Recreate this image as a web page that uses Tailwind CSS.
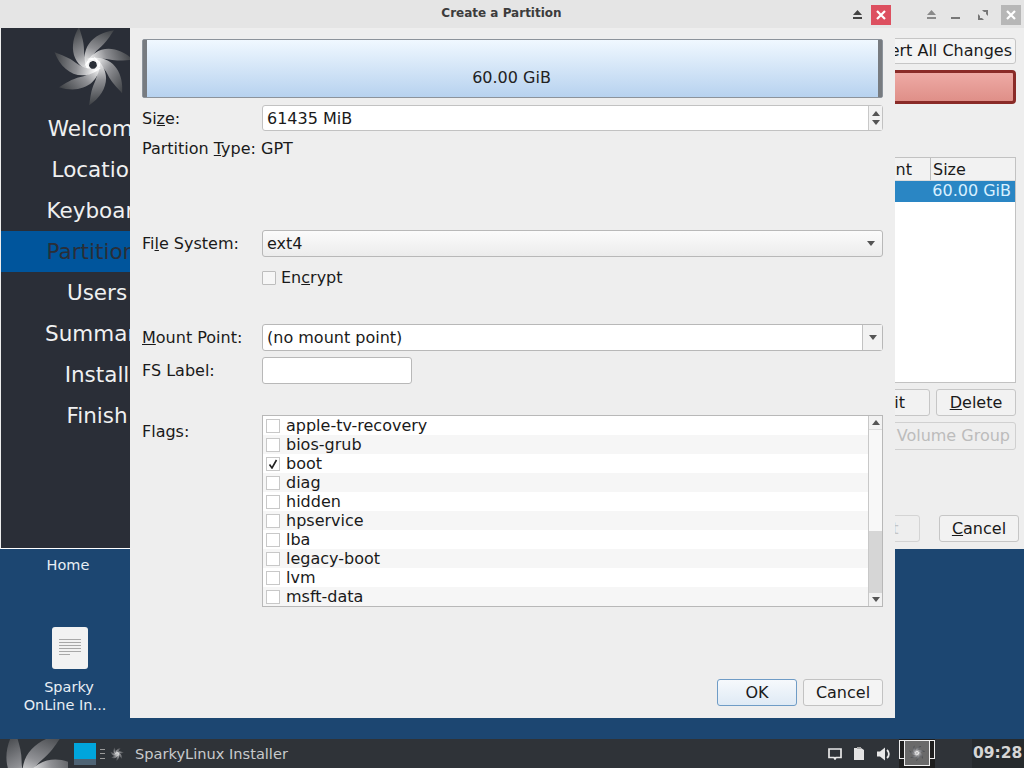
<!DOCTYPE html>
<html><head><meta charset="utf-8">
<script src="https://cdn.jsdelivr.net/npm/@tailwindcss/browser@4"></script>
</head>
<body class="m-0 overflow-hidden">
<div class="relative w-[1024px] h-[768px] overflow-hidden bg-[#1c4671] font-['DejaVu_Sans',sans-serif] text-[16px] text-[#1a1a1a]">
  <svg width="0" height="0" class="absolute">
    <defs>
      <linearGradient id="bl" x1="0.3" y1="0" x2="0.6" y2="1"><stop offset="0" stop-color="#3f4246"/><stop offset="0.55" stop-color="#8f9094"/><stop offset="1" stop-color="#ffffff"/></linearGradient>
      <path id="blade" d="M-14 -38C-25 -20 -22 3 3 8C-5 2 -9 -6 -9 -15C-9 -24 -12 -31 -14 -38Z" fill="url(#bl)"/>
      <g id="swirl">
        <use href="#blade"/><use href="#blade" transform="rotate(51.4)"/><use href="#blade" transform="rotate(102.8)"/><use href="#blade" transform="rotate(154.3)"/><use href="#blade" transform="rotate(205.7)"/><use href="#blade" transform="rotate(257.1)"/><use href="#blade" transform="rotate(308.6)"/>
      </g>
    </defs>
  </svg>

  <!-- Desktop icons -->
  <div class="absolute left-[18px] top-[557px] w-[100px] text-center text-[14.5px] leading-[17px] text-[#e8eef4]">Home</div>
  <div class="absolute left-[10px] top-[627px] w-[120px] flex flex-col items-center text-center text-[14.5px] leading-[18px] text-[#e8eef4]">
    <div class="w-[36px] h-[42px] rounded-[3px] bg-[#f2f2f2] flex flex-col gap-[2px] px-[7px] py-[12px]">
      <div class="h-[1px] bg-[#a8a8a8]"></div><div class="h-[1px] bg-[#a8a8a8]"></div><div class="h-[1px] bg-[#a8a8a8]"></div><div class="h-[1px] bg-[#a8a8a8]"></div><div class="h-[1px] bg-[#a8a8a8]"></div><div class="h-[1px] w-[11px] bg-[#a8a8a8]"></div>
    </div>
    <div class="mt-[9px] -ml-[2px]">Sparky</div>
    <div class="-ml-[10px]">OnLine In...</div>
  </div>

  <!-- Installer window (behind) -->
  <div class="absolute left-0 top-0 w-[1024px] h-[549px] bg-[#eeeeee] flex flex-col">
    <div class="h-[28px] shrink-0 bg-[#e5e5e5] relative">
      <svg class="absolute left-[926px] top-[10px]" width="11" height="9" viewBox="0 0 11 9"><path d="M5.5 0L10 5H1Z M1 7H10V9H1Z" fill="#8a8a8a"/></svg>
      <div class="absolute left-[951px] top-[17px] w-[9px] h-[2px] bg-[#777]"></div>
      <svg class="absolute left-[978px] top-[10px]" width="10" height="10" viewBox="0 0 10 10"><path d="M4 0H10V6L8 4V2H6Z M0 4L2 6V8H4L6 10H0Z" fill="#777"/></svg>
      <div class="absolute left-[1001px] top-[5px] w-[20px] h-[20px] bg-[#b7b7b7] flex items-center justify-center">
        <svg width="10" height="10" viewBox="0 0 10 10"><path d="M1 1L9 9M9 1L1 9" stroke="#fff" stroke-width="2.2"/></svg>
      </div>
    </div>
    <div class="flex-1 flex min-h-0">
      <div class="w-[192px] ml-[1px] shrink-0 bg-[#2a2e37] flex flex-col text-[21.5px] text-[#eff0f1] text-center border-b border-[#fff]">
        <div class="h-[80px] flex justify-center">
          <svg width="80" height="80" viewBox="-40 -40 80 80" class="ml-[-8px] -mt-[3px]"><use href="#swirl"/></svg>
        </div>
        <div class="h-[41px] leading-[41px]">Welcome</div>
        <div class="h-[41px] leading-[41px]">Location</div>
        <div class="h-[41px] leading-[41px]">Keyboard</div>
        <div class="h-[41px] leading-[41px] bg-[#00559c] text-[#2a2e37]">Partitions</div>
        <div class="h-[41px] leading-[41px]">Users</div>
        <div class="h-[41px] leading-[41px]">Summary</div>
        <div class="h-[41px] leading-[41px]">Install</div>
        <div class="h-[41px] leading-[41px]">Finish</div>
      </div>
      <div class="flex-1 pr-[8px] flex flex-col items-end min-w-0 text-[16px]">
        <div class="mt-[10px] h-[26px] pl-[6px] pr-[3px] flex items-center bg-[#f4f4f4] border border-[#c6c6c6] rounded-[3px] whitespace-nowrap">Revert All Changes</div>
        <div class="mt-[6px] h-[34px] w-[300px] bg-gradient-to-b from-[#eeaaa5] to-[#df8f88] border-[3px] border-[#8a2b28] rounded-[4px]"></div>
        <div class="mt-[53px] w-[300px] h-[226px] border border-[#c2c2c2] bg-white flex flex-col">
          <div class="h-[23px] bg-[#f2f2f2] flex justify-end border-b border-[#dcdcdc]">
            <div class="w-[39px] pr-[18px] text-right leading-[24px]">nt</div>
            <div class="w-[85px] pl-[2px] border-l border-[#bdbdbd] leading-[24px]">Size</div>
          </div>
          <div class="h-[21px] bg-[#2a86c4] text-[#d8f0ff] text-right pr-[4px] leading-[20px]">60.00 GiB</div>
        </div>
        <div class="mt-[6px] flex gap-[6px]">
          <div class="w-[80px] h-[27px] bg-[#f2f2f2] border border-[#c6c6c6] rounded-[3px] text-right pr-[24px] leading-[25px]">Edit</div>
          <div class="w-[80px] h-[27px] bg-[#f2f2f2] border border-[#c6c6c6] rounded-[3px] text-center leading-[25px]"><span class="underline">D</span>elete</div>
        </div>
        <div class="mt-[6px] h-[28px] px-[5px] bg-[#eeeeee] border border-[#d0d0d0] rounded-[3px] text-[#bcbcbc] leading-[26px] whitespace-nowrap">Create Volume Group</div>
        <div class="mt-[65px] -mr-[3px] flex gap-[19px]">
          <div class="w-[80px] h-[27px] bg-[#eeeeee] border border-[#d4d4d4] rounded-[3px] text-[#c4c4c4] text-center leading-[25px]">Next</div>
          <div class="w-[80px] h-[27px] bg-[#f2f2f2] border border-[#c6c6c6] rounded-[3px] text-center leading-[25px]"><span class="underline">C</span>ancel</div>
        </div>
      </div>
    </div>
  </div>

  <!-- Create a Partition dialog -->
  <div class="absolute left-[130px] top-0 w-[765px] h-[718px] bg-[#eeeeee] flex flex-col">
    <div class="h-[28px] shrink-0 -ml-[130px] w-[895px] bg-[#e5e5e5] relative text-center text-[12px] font-bold leading-[27px] text-[#3c3c3c]">
      <span class="pl-[108px]">Create a Partition</span>
      <svg class="absolute left-[852px] top-[10px]" width="11" height="9" viewBox="0 0 11 9"><path d="M5.5 0L10 5H1Z M1 7H10V9H1Z" fill="#444"/></svg>
      <div class="absolute left-[871px] top-[5px] w-[20px] h-[20px] bg-[#dd5060] flex items-center justify-center">
        <svg width="10" height="10" viewBox="0 0 10 10"><path d="M1 1L9 9M9 1L1 9" stroke="#fff" stroke-width="2.2"/></svg>
      </div>
    </div>
    <div class="flex-1 px-[12px] flex flex-col">
      <div class="mt-[11px] h-[59px] flex border border-[#8c939b] rounded-[2px]">
        <div class="w-[4px] bg-[#777b80]"></div>
        <div class="flex-1 bg-gradient-to-b from-[#f0f8ff] to-[#b7d2ef] flex items-end justify-center pb-[9px] pr-[2px] leading-[20px] text-[#222]">60.00 GiB</div>
        <div class="w-[4px] bg-[#777b80]"></div>
      </div>
      <div class="mt-[7px] h-[26px] flex items-center">
        <div class="w-[120px] shrink-0 pt-[2px]">Si<span class="underline">z</span>e:</div>
        <div class="flex-1 h-[26px] flex bg-white border border-[#c2c2c2] rounded-[3px]">
          <div class="flex-1 pl-[4px] leading-[26px]">61435 MiB</div>
          <div class="w-[14px] bg-[#f2f2f2] border-l border-[#c8c8c8] flex flex-col items-center justify-center gap-[4px]">
            <svg width="8" height="5" viewBox="0 0 8 5"><path d="M4 0L8 5H0Z" fill="#555"/></svg>
            <svg width="8" height="5" viewBox="0 0 8 5"><path d="M0 0H8L4 5Z" fill="#555"/></svg>
          </div>
        </div>
      </div>
      <div class="mt-[8px] h-[20px] leading-[20px] whitespace-nowrap">Partition <span class="underline">T</span>ype: GPT</div>
      <div class="mt-[71px] h-[27px] flex items-center">
        <div class="w-[120px] shrink-0">Fi<span class="underline">l</span>e System:</div>
        <div class="flex-1 h-[27px] flex items-center justify-between pl-[4px] pr-[7px] bg-gradient-to-b from-[#fbfbfb] to-[#ececec] border border-[#b8b8b8] rounded-[3px]">
          <span>ext4</span>
          <svg width="8" height="5" viewBox="0 0 8 5"><path d="M0 0H8L4 5Z" fill="#555"/></svg>
        </div>
      </div>
      <div class="mt-[11px] h-[20px] pl-[120px] flex items-center gap-[5px]">
        <div class="w-[14px] h-[14px] bg-[#f6f6f6] border border-[#bdbdbd] rounded-[1px]"></div>
        <div>En<span class="underline">c</span>rypt</div>
      </div>
      <div class="mt-[36px] h-[27px] flex items-center">
        <div class="w-[120px] shrink-0"><span class="underline">M</span>ount Point:</div>
        <div class="flex-1 h-[27px] flex bg-white border border-[#b8b8b8] rounded-[3px]">
          <div class="flex-1 pl-[4px] leading-[25px]">(no mount point)</div>
          <div class="w-[20px] bg-[#f2f2f2] border-l border-[#c2c2c2] flex items-center justify-center">
            <svg width="8" height="5" viewBox="0 0 8 5"><path d="M0 0H8L4 5Z" fill="#555"/></svg>
          </div>
        </div>
      </div>
      <div class="mt-[6px] h-[27px] flex items-center">
        <div class="w-[120px] shrink-0">FS Label:</div>
        <div class="w-[150px] h-[27px] bg-white border border-[#b8b8b8] rounded-[3px]"></div>
      </div>
      <div class="mt-[31px] flex">
        <div class="w-[120px] shrink-0 pt-[5px]">Flags:</div>
        <div class="flex-1 h-[192px] flex bg-white border border-[#b8b8b8]">
          <div class="flex-1 flex flex-col leading-[19px]">
            <div class="h-[19px] flex items-center gap-[6px] pl-[3px] bg-white"><div class="w-[14px] h-[14px] border border-[#c8c8c8] bg-white"></div>apple-tv-recovery</div>
            <div class="h-[19px] flex items-center gap-[6px] pl-[3px] bg-[#f6f6f6]"><div class="w-[14px] h-[14px] border border-[#c8c8c8] bg-white"></div>bios-grub</div>
            <div class="h-[19px] flex items-center gap-[6px] pl-[3px] bg-white"><div class="w-[14px] h-[14px] border border-[#c8c8c8] bg-white flex items-center justify-center"><svg width="10" height="10" viewBox="0 0 10 10"><path d="M1.5 5.5L4 9L8.5 1" fill="none" stroke="#222" stroke-width="1.6"/></svg></div>boot</div>
            <div class="h-[19px] flex items-center gap-[6px] pl-[3px] bg-[#f6f6f6]"><div class="w-[14px] h-[14px] border border-[#c8c8c8] bg-white"></div>diag</div>
            <div class="h-[19px] flex items-center gap-[6px] pl-[3px] bg-white"><div class="w-[14px] h-[14px] border border-[#c8c8c8] bg-white"></div>hidden</div>
            <div class="h-[19px] flex items-center gap-[6px] pl-[3px] bg-[#f6f6f6]"><div class="w-[14px] h-[14px] border border-[#c8c8c8] bg-white"></div>hpservice</div>
            <div class="h-[19px] flex items-center gap-[6px] pl-[3px] bg-white"><div class="w-[14px] h-[14px] border border-[#c8c8c8] bg-white"></div>lba</div>
            <div class="h-[19px] flex items-center gap-[6px] pl-[3px] bg-[#f6f6f6]"><div class="w-[14px] h-[14px] border border-[#c8c8c8] bg-white"></div>legacy-boot</div>
            <div class="h-[19px] flex items-center gap-[6px] pl-[3px] bg-white"><div class="w-[14px] h-[14px] border border-[#c8c8c8] bg-white"></div>lvm</div>
            <div class="h-[19px] flex items-center gap-[6px] pl-[3px] bg-[#f6f6f6]"><div class="w-[14px] h-[14px] border border-[#c8c8c8] bg-white"></div>msft-data</div>
          </div>
          <div class="w-[14px] border-l border-[#c8c8c8] bg-[#f8f8f8] flex flex-col">
            <div class="h-[14px] bg-[#f2f2f2] border-b border-[#dcdcdc] flex items-center justify-center"><svg width="8" height="5" viewBox="0 0 8 5"><path d="M4 0L8 5H0Z" fill="#555"/></svg></div>
            <div class="flex-1"></div>
            <div class="h-[62px] bg-[#d6d6d6]"></div>
            <div class="h-[13px] bg-[#f2f2f2] flex items-center justify-center"><svg width="8" height="5" viewBox="0 0 8 5"><path d="M0 0H8L4 5Z" fill="#555"/></svg></div>
          </div>
        </div>
      </div>
      <div class="mt-[72px] flex justify-end gap-[6px]">
        <div class="w-[80px] h-[27px] bg-gradient-to-b from-[#f6f9fc] to-[#dfeaf5] border border-[#6f9cc6] rounded-[3px] text-center leading-[25px]">OK</div>
        <div class="w-[80px] h-[27px] bg-[#f4f4f4] border border-[#c2c2c2] rounded-[3px] text-center leading-[25px]">Cancel</div>
      </div>
    </div>
  </div>

  <!-- Taskbar -->
  <div class="absolute left-0 top-[739px] w-[1024px] h-[29px] bg-[#2f3338] flex items-center">
    <div class="w-[68px] h-[29px] overflow-hidden shrink-0">
      <svg width="110" height="110" viewBox="-40 -40 80 80" class="-mt-[12px] -ml-[21px] max-w-none"><use href="#swirl"/></svg>
    </div>
    <div class="ml-[6px] w-[22px] h-[22px] flex flex-col shrink-0">
      <div class="h-[16px] bg-[#00a5dc]"></div><div class="h-[6px] bg-[#4f6475]"></div>
    </div>
    <div class="ml-[4px] w-[5px] h-[10px] flex flex-col justify-between shrink-0">
      <div class="h-[1px] bg-[#9a9a9a]"></div><div class="h-[1px] bg-[#9a9a9a]"></div><div class="h-[1px] bg-[#9a9a9a]"></div>
    </div>
    <svg width="14" height="14" viewBox="-40 -40 80 80" class="ml-[5px] shrink-0"><use href="#swirl"/></svg>
    <div class="ml-[11px] text-[14.6px] text-[#c8cacc] whitespace-nowrap">SparkyLinux Installer</div>
    <div class="flex-1"></div>
    <svg width="14" height="12" viewBox="0 0 14 12" class="shrink-0"><path d="M1 1H13V9.5H8L7 11L6 9.5H1Z" fill="none" stroke="#e8e8e8" stroke-width="1.7"/></svg>
    <svg width="12" height="14" viewBox="0 0 12 14" class="ml-[11px] shrink-0"><path d="M1 1H8L11 3V13H1Z" fill="#e4e4e4"/><path d="M4 0H8V2H4Z" fill="#aaa"/></svg>
    <svg width="15" height="14" viewBox="0 0 15 14" class="ml-[12px] shrink-0"><path d="M0 4.5H3L8 0.5V13.5L3 9.5H0Z" fill="#e8e8e8"/><path d="M10 3C12.5 5 12.5 9 10 11" fill="none" stroke="#e8e8e8" stroke-width="1.8"/></svg>
    <div class="ml-[7px] w-[36px] h-[29px] bg-[#1e1e1e] relative shrink-0">
      <div class="absolute left-0 top-[1px] right-0 h-[19px] border border-[#eee]"></div>
      <div class="absolute left-[5px] top-[1px] w-[26px] h-[26px] bg-[#6a6a6a] border border-[#eee] flex items-center justify-center">
        <svg width="16" height="16" viewBox="-40 -40 80 80"><use href="#swirl"/></svg>
      </div>
    </div>
    <div class="w-[37px] h-[29px] bg-[#2f3338] shrink-0"></div>
    <div class="w-[52px] h-[29px] bg-[#262a2d] text-[15.5px] font-bold text-[#d6d6d6] leading-[29px] pl-[1px] shrink-0 whitespace-nowrap">09:28</div>
  </div>
</div>
</body></html>
